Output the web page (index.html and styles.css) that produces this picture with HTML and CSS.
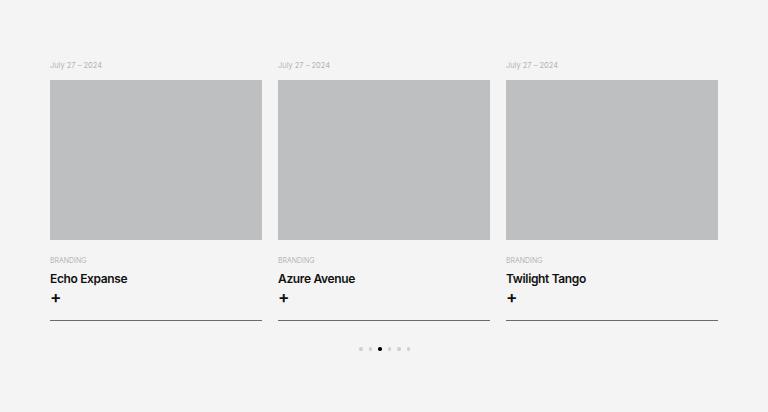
FILE: index.html
```html
<!DOCTYPE html>
<html lang="en">
<head>
	<meta charset="UTF-8">
	<title>Projects</title>
	<link rel="stylesheet" href="styles.css">
</head>
<body>
<div id="wrap">
	<ul id="list">
		<li class="card">
			<p class="date">July 27 – 2024</p>
			<div class="pic"></div>
			<p class="cat">BRANDING</p>
			<h3 class="title">Echo Expanse</h3>
			<span class="plus">+</span>
		</li>
		<li class="card">
			<p class="date">July 27 – 2024</p>
			<div class="pic"></div>
			<p class="cat">BRANDING</p>
			<h3 class="title">Azure Avenue</h3>
			<span class="plus">+</span>
		</li>
		<li class="card">
			<p class="date">July 27 – 2024</p>
			<div class="pic"></div>
			<p class="cat">BRANDING</p>
			<h3 class="title">Twilight Tango</h3>
			<span class="plus">+</span>
		</li>
	</ul>
	<ol id="dotList">
		<li></li>
		<li></li>
		<li class="active"></li>
		<li></li>
		<li></li>
		<li></li>
	</ol>
</div>
</body>
</html>
```

FILE: styles.css
```css
body {
	margin: 0;
	background: #f4f4f4;
	font-family: Inter, "Noto Sans", sans-serif;
	color: #111;
}
ul,ol {
	margin: 0;
	padding: 0;
	list-style: none;
}
#wrap {
	padding: 60px 50px 0;
}
#list {
	display: grid;
	grid-template-columns: repeat(3, 212px);
	gap: 16px;
}
.card {
	display: flex;
	flex-direction: column;
	border-bottom: 1px solid #6a6a6a;
	padding-bottom: 13px;
}
.date {
	margin: 0 0 8px;
	font-size: 7.5px;
	line-height: 12px;
	font-weight: 300;
	color: #a0a0a0;
}
.pic {
	height: 160px;
	background: #bebfc0;
}
.cat {
	margin: 16px 0 0;
	font-size: 7px;
	line-height: 10px;
	font-weight: 300;
	color: #a6a6a6;
}
.title {
	margin: 5px 0 0;
	font-size: 12px;
	line-height: 16px;
	font-weight: 600;
	letter-spacing: -0.35px;
}
.plus {
	margin-top: 0;
	font-size: 17px;
	line-height: 20px;
	font-weight: 600;
}
#dotList {
	display: flex;
	justify-content: center;
	gap: 6px;
	margin-top: 26px;
	padding-left: 1px;
}
#dotList li {
	width: 3.5px;
	height: 3.5px;
	border-radius: 50%;
	background: #cfcfcf;
}
#dotList li.active {
	background: #000;
}
```
